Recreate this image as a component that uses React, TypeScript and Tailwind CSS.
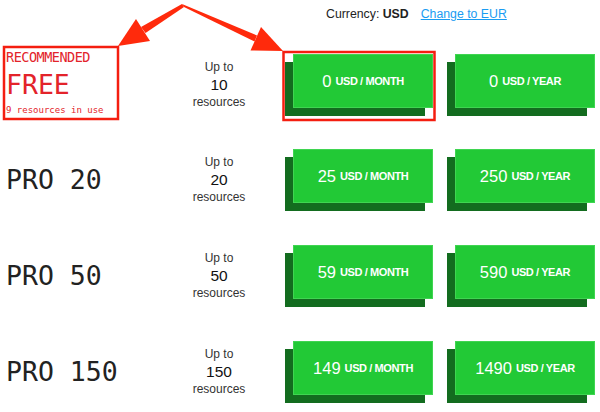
const plans = [
  { name: "FREE", limit: 10, month: 0, year: 0, recommended: true },
  { name: "PRO 20", limit: 20, month: 25, year: 250 },
  { name: "PRO 50", limit: 50, month: 59, year: 590 },
  { name: "PRO 150", limit: 150, month: 149, year: 1490 },
];

const mono = { fontFamily: '"DejaVu Sans Mono", "Liberation Mono", monospace' };

const PriceButton = ({ amount, period }: { amount: number; period: string }) => (
  <button className="flex h-[54px] w-[140px] items-center justify-center gap-[4px] border border-[#3fd551] bg-[#22c936] text-white shadow-[-8px_8px_0_0_#136c1f]">
    <span className="text-[16.5px] leading-none">{amount}</span>
    <span className="text-[11px] font-bold leading-none tracking-[-0.4px]">USD / {period}</span>
  </button>
);

export default function App() {
  return (
    <div
      className="relative h-[412px] w-[600px] overflow-hidden bg-white text-[#222]"
      style={{ fontFamily: '"Liberation Sans", Arial, sans-serif' }}
    >
      {/* currency switch */}
      <div className="flex h-[38px] pl-[326px] pt-[4px] text-[12.3px] leading-[20px]">
        <span>
          Currency: <b>USD</b>
        </span>
        <a href="#" className="ml-[12px] text-[#1a9cf2] underline">
          Change to EUR
        </a>
      </div>

      {plans.map((plan, i) => (
        <div key={plan.name} className={`flex items-center ${i === 0 ? "h-[94px]" : "h-[96px]"}`}>
          <div className="w-[171px] pl-[6px] font-extralight" style={mono}>
            {plan.recommended ? (
              <div className="pb-[6px] text-[#e3232a]">
                <div className="mb-[4px] text-[13.5px] leading-[16px] tracking-[-0.5px]">RECOMMENDED</div>
                <div className="text-[26.5px] leading-[32px]">{plan.name}</div>
                <div className="mt-[3px] text-[9px] leading-[12px]">9 resources in use</div>
              </div>
            ) : (
              <div className="text-[26.5px] leading-[32px] text-[#222]">{plan.name}</div>
            )}
          </div>

          <div className="w-[96px] text-center text-[#333]">
            <div className="text-[12px] leading-[17px]">Up to</div>
            <div className="text-[15.5px] leading-[18px] text-[#111]">{plan.limit}</div>
            <div className="text-[12px] leading-[17px]">resources</div>
          </div>

          <div className="ml-[26px] flex gap-[22px] pb-[8px]">
            <PriceButton amount={plan.month} period="MONTH" />
            <PriceButton amount={plan.year} period="YEAR" />
          </div>
        </div>
      ))}

      {/* annotation overlay */}
      <svg className="pointer-events-none absolute left-0 top-0" width="600" height="412" viewBox="0 0 600 412">
        <rect x="4" y="47" width="114" height="72" fill="none" stroke="#f41e10" strokeWidth="2.5" />
        <rect x="283.5" y="52" width="151" height="68" fill="none" stroke="#f41e10" strokeWidth="2.5" />
        <polygon points="182,4 184,7 145.5,33 141,27" fill="#ff2a0c" />
        <polygon points="150,41 136,19 118,46" fill="#ff2a0c" />
        <polygon points="182,4 184,7 254.5,41.5 257,35.5" fill="#ff2a0c" />
        <polygon points="250.5,50.5 261,27 283,51" fill="#ff2a0c" />
      </svg>
    </div>
  );
}
